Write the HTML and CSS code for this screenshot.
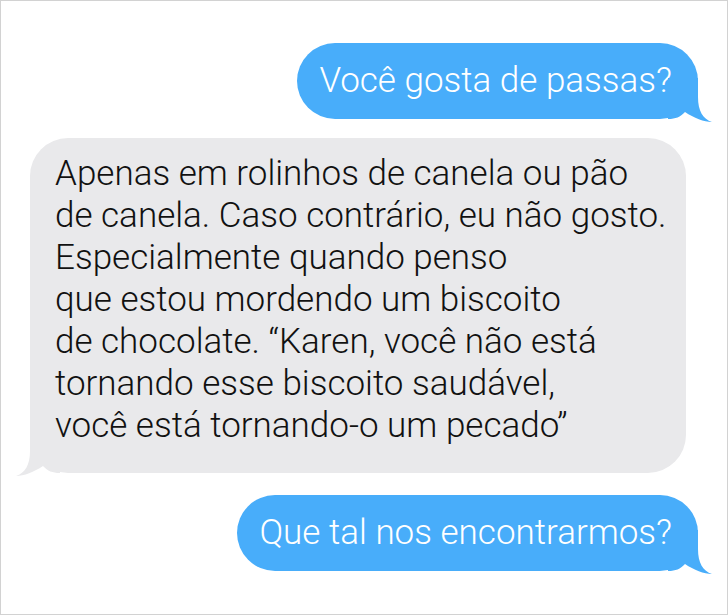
FILE: index.html
```html
<!DOCTYPE html>
<html lang="pt-BR">
<head>
    <meta charset="UTF-8">
    <meta name="viewport" content="width=device-width, initial-scale=1.0">
    <title>Conversa</title>
    <link rel="stylesheet" href="styles.css">
</head>
<body>
<div class="frame">
    <div class="thread">
        <div class="bubble sent">
            Você gosta de passas?
            <svg class="tail" viewBox="-30 -41 45 45" width="45" height="45"><path d="M0 -41 L0 -22 C0 -8 5 0 14 3 C6 3 -4 -1 -13 -7 C-18 -2 -22 0 -30 0 L-30 -41 Z"/></svg>
        </div>

        <div class="bubble received">
            Apenas em rolinhos de canela ou pão<br>
            de canela. Caso contrário, eu não gosto.<br>
            Especialmente quando penso<br>
            que estou mordendo um biscoito<br>
            de chocolate. “Karen, você não está<br>
            tornando esse biscoito saudável,<br>
            você está tornando-o um pecado”
            <svg class="tail" viewBox="-30 -41 45 45" width="45" height="45"><path d="M0 -41 L0 -22 C0 -8 5 0 14 3 C6 3 -4 -1 -13 -7 C-18 -2 -22 0 -30 0 L-30 -41 Z"/></svg>
        </div>

        <div class="bubble sent last">
            Que tal nos encontrarmos?
            <svg class="tail" viewBox="-30 -41 45 45" width="45" height="45"><path d="M0 -41 L0 -22 C0 -8 5 0 14 3 C6 3 -4 -1 -13 -7 C-18 -2 -22 0 -30 0 L-30 -41 Z"/></svg>
        </div>
    </div>
</div>
</body>
</html>
```

FILE: styles.css
```css
:root {
    --blue: #48adfa;
    --gray: #e9e9eb;
    --ink: #111;
}

* {
    margin: 0;
    padding: 0;
    box-sizing: border-box;
}

body {
    background: #fff;
    font-family: Roboto, 'Noto Sans', sans-serif;
    font-weight: 300;
}

.frame {
    width: 728px;
    height: 615px;
    border: 1px solid #d2d2d2;
    padding: 42px 29px;
}

.thread {
    display: flex;
    flex-direction: column;
    gap: 19px;
}

.bubble {
    position: relative;
    font-size: 35px;
    line-height: 42px;
    border-radius: 38px;
    width: fit-content;
}

.bubble .tail {
    position: absolute;
    bottom: -4px;
}

.sent {
    align-self: flex-end;
    background: var(--blue);
    color: #fff;
    padding: 17px 26px 17px 22px;
}

.sent .tail {
    right: -15px;
    fill: var(--blue);
}

.sent.last {
    margin-top: 3px;
}

.received {
    align-self: flex-start;
    background: var(--gray);
    color: var(--ink);
    padding: 15px 20px 26px 25px;
}

.received .tail {
    left: -15px;
    fill: var(--gray);
    transform: scaleX(-1);
}
```
